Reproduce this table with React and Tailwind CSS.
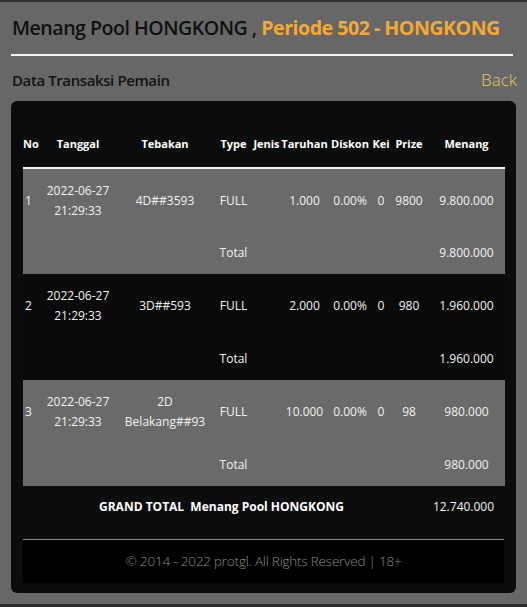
import React from "react";

const rows = [
  { no: "1", tebakan: ["4D##3593"], taruhan: "1.000", prize: "9800", menang: "9.800.000", gray: true },
  { no: "2", tebakan: ["3D##593"], taruhan: "2.000", prize: "980", menang: "1.960.000", gray: false },
  { no: "3", tebakan: ["2D", "Belakang##93"], taruhan: "10.000", prize: "98", menang: "980.000", gray: true },
];

export default function App() {
  return (
    <div
      className="w-[527px] h-[607px] bg-[#676767] flex flex-col overflow-hidden"
      style={{ fontFamily: "'Open Sans', 'Noto Sans', sans-serif" }}
    >
      <div className="h-[2px] bg-[#2a302c] shrink-0" />
      <div className="px-[11px] pt-[13px]">
        <div className="flex items-baseline pl-[1px] h-[26px] text-[19.6px] leading-[26px] whitespace-nowrap">
          <span className="font-semibold text-[#101010] tracking-[-0.5px]">Menang Pool HONGKONG ,&nbsp;</span>
          <span className="font-bold text-[#f4a934] tracking-[-0.5px]">Periode 502 - HONGKONG</span>
        </div>
        <div className="mt-[13px] h-[2px] w-[502px] bg-[#f2f2f2]" />
        <div className="flex justify-between items-center mt-[12px] h-[24px]">
          <span className="pl-[1px] text-[15px] font-semibold text-[#121212] tracking-[-0.4px]">Data Transaksi Pemain</span>
          <span className="text-[17px] font-light text-[#eac766] mr-[-1px]">Back</span>
        </div>
      </div>

      <div className="ml-[11px] mt-[9px] w-[505px] h-[492px] bg-[#0b0d0d] rounded-[6px] pt-[21px] px-[12px]">
        <table className="table-fixed w-[482px] border-collapse text-white">
          <colgroup>
            <col className="w-[20px]" />
            <col className="w-[70px]" />
            <col className="w-[104px]" />
            <col className="w-[33px]" />
            <col className="w-[31px]" />
            <col className="w-[47px]" />
            <col className="w-[44px]" />
            <col className="w-[18px]" />
            <col className="w-[38px]" />
            <col className="w-[77px]" />
          </colgroup>
          <thead>
            <tr className="h-[46px] text-[11px] font-bold whitespace-nowrap border-b-2 border-[#f4f4f4]">
              <th className="text-left p-0">No</th>
              <th className="text-center p-0">Tanggal</th>
              <th className="text-center p-0">Tebakan</th>
              <th className="text-center p-0">Type</th>
              <th className="text-center p-0 pl-[2px]">Jenis</th>
              <th className="text-center p-0">Taruhan</th>
              <th className="text-center p-0">Diskon</th>
              <th className="text-center p-0">Kei</th>
              <th className="text-center p-0">Prize</th>
              <th className="text-center p-0">Menang</th>
            </tr>
          </thead>
          <tbody className="text-[12px] text-[#f2f2f2] whitespace-nowrap">
            {rows.map((r) => (
              <React.Fragment key={r.no}>
                <tr className={"h-[62px] " + (r.gray ? "bg-[#6a6a6a]" : "bg-[#0a0a0a]")}>
                  <td className="p-0 pl-[2px] pt-[2px] text-left">{r.no}</td>
                  <td className="p-0 pt-[2px] text-center leading-[20px]">
                    <div>2022-06-27</div>
                    <div>21:29:33</div>
                  </td>
                  <td className="p-0 pt-[2px] text-center leading-[20px]">
                    {r.tebakan.map((t) => (
                      <div key={t}>{t}</div>
                    ))}
                  </td>
                  <td className="p-0 pt-[2px] text-center">FULL</td>
                  <td className="p-0"></td>
                  <td className="p-0 pt-[2px] text-center">{r.taruhan}</td>
                  <td className="p-0 pt-[2px] text-center">0.00%</td>
                  <td className="p-0 pt-[2px] text-center">0</td>
                  <td className="p-0 pt-[2px] text-center">{r.prize}</td>
                  <td className="p-0 pt-[2px] text-center">{r.menang}</td>
                </tr>
                <tr className={"h-[44px] " + (r.gray ? "bg-[#6a6a6a]" : "bg-[#0a0a0a]")}>
                  <td className="p-0" colSpan={3}></td>
                  <td className="p-0 pt-[2px] text-center">Total</td>
                  <td className="p-0" colSpan={5}></td>
                  <td className="p-0 pt-[2px] text-center">{r.menang}</td>
                </tr>
              </React.Fragment>
            ))}
            <tr className="h-[42px]">
              <td className="p-0 text-center text-[12px] font-bold text-white pr-[8px]" colSpan={9}>
                GRAND TOTAL&nbsp; Menang Pool HONGKONG
              </td>
              <td className="p-0 text-center pr-[6px]">12.740.000</td>
            </tr>
          </tbody>
        </table>
        <div className="mt-[11px] border-t border-[#8a8a8a] bg-black h-[44px] flex items-center justify-center">
          <span className="text-[13.5px] font-light text-[#8c8c8c] tracking-[-0.2px]">
            © 2014 - 2022 protgl. All Rights Reserved | 18+
          </span>
        </div>
      </div>
      <div className="flex-1" />
      <div className="h-[3px] bg-[#2b2b2b] shrink-0" />
    </div>
  );
}
